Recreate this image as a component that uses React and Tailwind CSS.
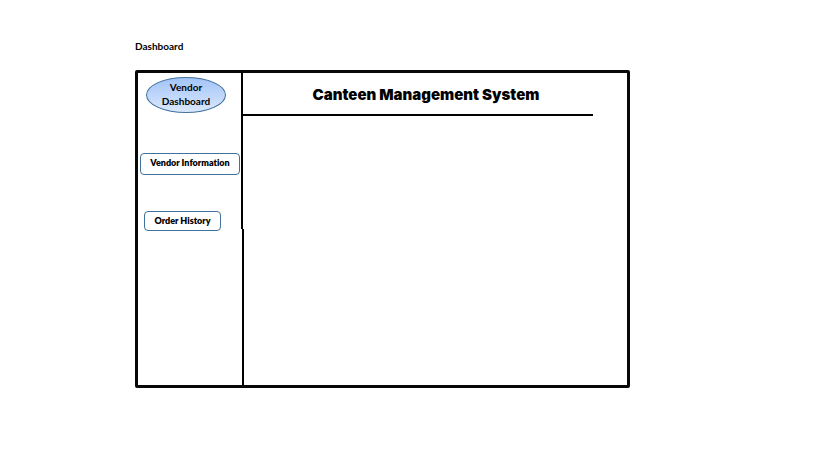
function Sidebar() {
  return (
    <aside className="flex shrink-0 flex-col items-start">
      <nav
        aria-label="Vendor"
        className="flex h-[156px] w-[105px] flex-col items-start border-r-2 border-black pt-1"
      >
        <h2 className="ml-2 flex h-9 w-20 shrink-0 items-center justify-center rounded-[50%] border border-[#41719c] bg-linear-to-b from-[#a3c4f8] to-[#dbe8fc] pb-0.5 text-center text-[10px] leading-[14px] font-bold">
          Vendor
          <br />
          Dashboard
        </h2>
        <button
          type="button"
          className="mt-10 ml-0.5 h-[22px] w-[100px] shrink-0 rounded-[4px] border border-[#41719c] bg-white pb-0.5 text-[9px] leading-3 font-extrabold whitespace-nowrap"
        >
          Vendor Information
        </button>
        <button
          type="button"
          className="mt-9 ml-1.5 h-5 w-[77px] shrink-0 rounded-[4px] border border-[#41719c] bg-white text-[9px] leading-3 font-extrabold whitespace-nowrap"
        >
          Order History
        </button>
      </nav>
      <div className="w-[106px] grow border-r-2 border-black" />
    </aside>
  );
}

export default function App() {
  return (
    <div className="min-h-screen bg-white pt-[39px] pr-[189px] pb-[72px] pl-[135px] font-['Lato','Open_Sans',sans-serif] text-black [font-variant-ligatures:none]">
      <p className="text-[10px] leading-[14px] font-bold">Dashboard</p>
      <div className="mt-[17px] flex min-h-[318px] rounded-[2px] border-3 border-[#080808]">
        <Sidebar />
        <main className="-ml-px min-w-0 grow">
          <header className="mr-[34px] flex h-[43px] items-center justify-center border-b-2 border-black pt-0.5 pl-4">
            <h1 className="font-['Inter','Liberation_Sans',Arial,sans-serif] text-[15px] leading-5 font-black whitespace-nowrap">
              Canteen Management System
            </h1>
          </header>
        </main>
      </div>
    </div>
  );
}
